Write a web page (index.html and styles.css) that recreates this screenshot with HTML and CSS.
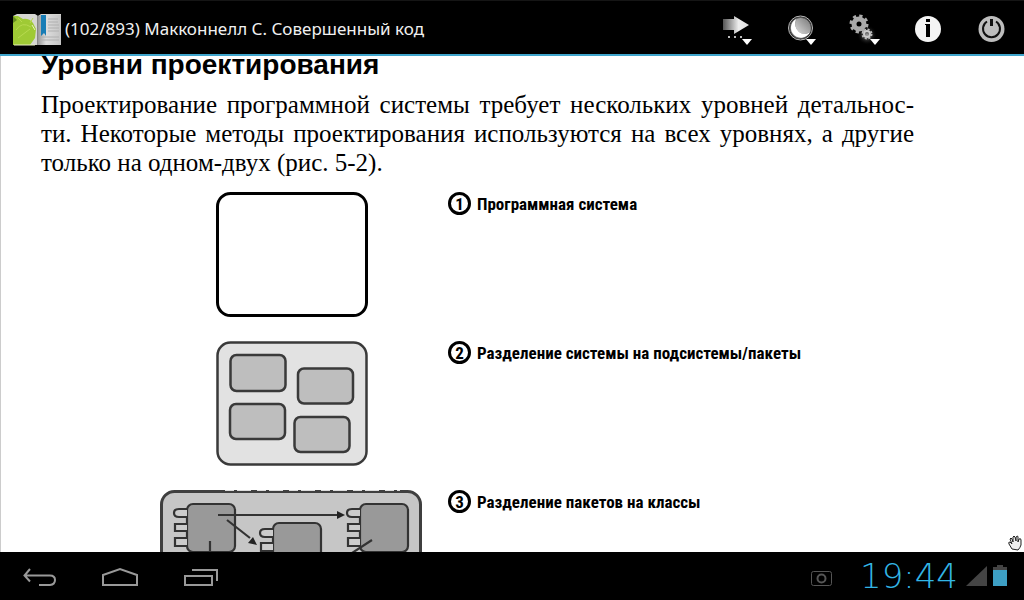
FILE: index.html
```html
<!DOCTYPE html>
<html lang="ru">
<head>
<meta charset="utf-8">
<meta name="viewport" content="width=device-width, initial-scale=1">
<title>Макконнелл С. Совершенный код</title>
<link rel="stylesheet" href="styles.css">
</head>
<body>
<header class="bar">
  <svg class="logo" width="48" height="32" viewBox="13 14 48 32" aria-hidden="true">
    <defs><linearGradient id="pg" x1="0" x2="1"><stop offset="0" stop-color="#999"/><stop offset=".35" stop-color="#ddd"/><stop offset="1" stop-color="#c4c4c4"/></linearGradient></defs>
    <path d="M13 16l4-2h18l3 2 3-2h20v31H13z" fill="#d6d6d2"/>
    <path d="M38 16l3-1h20v30H38z" fill="url(#pg)"/>
    <path d="M13 16h5l5 3q6-1 10 4l3 6-1 9-5 7H13z" fill="#9fca35"/>
    <path d="M18 18l4 4M33 18l-3 5M16 30q6-9 15-3M18 38l12-9" stroke="#b8da50" fill="none"/>
    <path d="M13 16l4 4-4 3z" fill="#668c20"/>
    <path d="M32 25l3 5M14 45h21" stroke="#e8f0c0"/>
    <path d="M37.500 16v29" stroke="#888"/>
    <path d="M48 19h10M48 22h10M48 25h11M48 28h11M48 31h11M41 37h18M41 40h18" stroke="#b0b0b0"/>
    <path d="M41 15h5v21l-2-3-3 3z" fill="#187db6"/>
  </svg>
  <h1 class="title">(102/893) Макконнелл С. Совершенный код</h1>
  <nav class="tools" aria-label="Инструменты">
    <button class="tool" type="button" aria-label="Перейти">
      <svg width="64" height="54" viewBox="704 0 64 54"><defs><linearGradient id="ar" x1="0" x2="1"><stop offset="0" stop-color="#555"/><stop offset=".6" stop-color="#eee"/><stop offset="1" stop-color="#ddd"/></linearGradient></defs><path d="M723 18h11v-3l15 9-15 9v-4h-11z" fill="url(#ar)"/><path d="M728 36h2m4 0h2m4 0h2" stroke="#bbb" stroke-width="2"/><path d="M742 38h10l-5 6z" fill="#fff"/></svg>
    </button>
    <button class="tool" type="button" aria-label="Ночной режим">
      <svg width="64" height="54" viewBox="768 0 64 54"><defs><linearGradient id="mo" x1="0" x2="1" y1="1" y2="0"><stop offset="0" stop-color="#ddd"/><stop offset="1" stop-color="#777"/></linearGradient></defs><circle cx="800.500" cy="27" r="12" fill="#222" stroke="#bbb"/><circle cx="800.500" cy="27" r="10.500" fill="#999" stroke="#555"/><path d="M796 18a10 10 0 1 0 14 13q-5 4-11 0-6-6-3-13z" fill="#fff"/><path d="M797 18q7-2 11 3 4 5 2 10-6 4-11 0-6-6-2-13z" fill="url(#mo)"/><path d="M806 38h10l-5 6z" fill="#fff"/></svg>
    </button>
    <button class="tool" type="button" aria-label="Настройки">
      <svg width="64" height="54" viewBox="832 0 64 54"><defs><radialGradient id="gl"><stop offset="0" stop-color="#aaa"/><stop offset="1" stop-color="#000" stop-opacity="0"/></radialGradient></defs><circle cx="867" cy="34" r="10" fill="url(#gl)"/><circle cx="859" cy="23" r="5" fill="none" stroke="#aaa" stroke-width="5"/><circle cx="859" cy="23" r="8" fill="none" stroke="#aaa" stroke-width="3" stroke-dasharray="3.200 3.080"/><circle cx="867" cy="33" r="3" fill="none" stroke="#ccc" stroke-width="2"/><circle cx="867" cy="33" r="4.500" fill="none" stroke="#bbb" stroke-width="2" stroke-dasharray="2 1.530"/><path d="M870 38h10l-5 6z" fill="#fff"/></svg>
    </button>
    <button class="tool" type="button" aria-label="Сведения">
      <svg width="64" height="54" viewBox="896 0 64 54"><circle cx="928" cy="28" r="13" fill="#f4f4f4"/><path d="M926 18h4v3h-4zM925 23h5v13h-4V24h-1z" fill="#000"/></svg>
    </button>
    <button class="tool" type="button" aria-label="Выход">
      <svg width="64" height="54" viewBox="960 0 64 54"><circle cx="991.500" cy="28" r="13" fill="#bdbdbd"/><path d="M987 20.500a8.500 8.500 0 1 0 9 0" fill="none" stroke="#111" stroke-width="2"/><path d="M989 16h5v10h-5z" fill="#bdbdbd"/><path d="M991.500 18v7" stroke="#111" stroke-width="3"/></svg>
    </button>
  </nav>
</header>

<main class="page">
  <article class="sheet">
    <h2 class="heading">Уровни проектирования</h2>
    <p class="text"><span class="line">Проектирование программной системы требует нескольких уровней детальнос-</span><span class="line">ти. Некоторые методы проектирования используются на всех уровнях, а другие</span>только на одном-двух (рис. 5-2).</p>
    <div class="levels">
      <figure class="level">
        <svg class="art" width="262" height="125" viewBox="160 193 262 125" aria-hidden="true"><rect x="217.500" y="194.500" width="149" height="122" rx="13" fill="#fff" stroke="#000" stroke-width="3"/></svg>
        <figcaption class="caption"><span class="num">1</span>Программная система</figcaption>
      </figure>
      <figure class="level">
        <svg class="art" width="262" height="125" viewBox="160 341 262 125" aria-hidden="true"><g stroke="#3a3a3a" stroke-width="2.500"><rect x="217.500" y="342.500" width="149" height="122" rx="13" fill="#e2e2e2"/><g fill="#bebebe"><rect x="230.500" y="355" width="55" height="36" rx="6"/><rect x="298" y="368.500" width="55" height="35" rx="6"/><rect x="230" y="404" width="55" height="35" rx="6"/><rect x="294.500" y="417" width="55" height="35" rx="6"/></g></g></svg>
        <figcaption class="caption"><span class="num">2</span>Разделение системы на подсистемы/пакеты</figcaption>
      </figure>
      <figure class="level">
        <svg class="art" width="262" height="125" viewBox="160 490 262 125" aria-hidden="true"><rect x="161.500" y="491.500" width="259" height="122" rx="13" fill="#c6c6c6" stroke="#3f3f3f" stroke-width="3"/><path d="M225 490.500h175" stroke="#ddd" stroke-dasharray="9 3 14 6"/><g stroke="#333" stroke-width="2.200"><g fill="#999"><rect x="187" y="504" width="48" height="48" rx="6"/><rect x="273" y="523" width="48" height="48" rx="6"/><rect x="360" y="504" width="48" height="48" rx="6"/></g><g fill="#ccc"><path d="M187 509h-8q-5 0-5 4 0 4 5 4h8M187 524h-12v7h12M187 538h-12v8h12M273 529h-8q-5 0-5 4 0 4 5 4h8M273 543h-12v8h12M360 509h-8q-5 0-5 4 0 4 5 4h8M360 524h-12v7h12M360 538h-12v8h12"/></g><path d="M218 515h121M227 520l23 18M210 552v-11M352 553l20-13" fill="none"/></g><path d="M345 515l-8-4v8zM257 545l-9-2 5-6z" fill="#222"/></svg>
        <figcaption class="caption"><span class="num">3</span>Разделение пакетов на классы</figcaption>
      </figure>
    </div>
  </article>
  <svg class="hand" width="16" height="17" viewBox="1008 535 16 17" aria-hidden="true"><path d="M1012 549l-3-5q-1-2 1-2l2 2-2-5q1-2 2 0l1 3v-5q1-2 2 0l1 4 0-4q2-2 2 0v5l1-3q2-1 2 1v5q-1 3-3 5z" fill="#eee" stroke="#222"/></svg>
</main>

<footer class="system">
  <button class="key" type="button" aria-label="Назад"><svg width="80" height="48" viewBox="0 552 80 48"><path d="M30 569l-5.500 6.500 5.500 6M25 575.500h25q5 0 5 4.500t-5 5H39" fill="none" stroke="#999" stroke-width="2"/></svg></button>
  <button class="key" type="button" aria-label="Домой"><svg width="80" height="48" viewBox="80 552 80 48"><path d="M103 585v-10l17-6 17 6v10z" fill="none" stroke="#999" stroke-width="2"/></svg></button>
  <button class="key" type="button" aria-label="Недавние"><svg width="80" height="48" viewBox="160 552 80 48"><path d="M185 576h27v9h-27zM192 570h25v11" fill="none" stroke="#999" stroke-width="2"/></svg></button>
  <div class="status">
    <svg class="camera" width="21" height="15" viewBox="810 571 21 15" aria-hidden="true"><rect x="810.500" y="571.500" width="20" height="14" rx="2" fill="none" stroke="#555"/><circle cx="820.500" cy="578.500" r="4" fill="none" stroke="#555" stroke-width="2"/></svg>
    <time class="clock">19:44</time>
    <svg class="signs" width="41" height="22" viewBox="966 565 41 22" aria-hidden="true"><path d="M966 586l21-20v20z" fill="#444"/><path d="M993 567h4v-2h6v2h4v4h-14z" fill="#444"/><path d="M993 570h14v16h-14z" fill="#3d9fc4"/></svg>
  </div>
</footer>
</body>
</html>
```
FILE: styles.css
```css
* { box-sizing: border-box; }

body {
  margin: 0;
  height: 100vh;
  display: flex;
  flex-direction: column;
  overflow: hidden;
  background: #000;
  font-family: "Noto Sans", Roboto, sans-serif;
}

svg { display: block; }

.bar {
  flex: none;
  display: flex;
  align-items: center;
  height: 56px;
  padding-left: 13px;
  border-top: 1px solid #151515;
  border-bottom: 2px solid #3fa5cc;
  color: #f0f0f0;
}

.logo { flex: none; margin-top: 4px; }

.title {
  flex: 1;
  margin: 2px 0 0 4px;
  font-size: 17px;
  line-height: 24px;
  font-weight: 400;
  white-space: nowrap;
  overflow: hidden;
  text-overflow: ellipsis;
}

.tools { display: flex; }

.tool,
.key {
  padding: 0;
  border: 0;
  background: none;
  cursor: pointer;
}

.page {
  position: relative;
  flex: 1;
  min-height: 0;
  overflow: hidden;
  background: #fff;
  color: #000;
  border-left: 1px solid #ccc;
}

.sheet {
  margin-top: -8px;
  padding: 0 110px 0 40px;
}

.heading {
  margin: 0;
  font: bold 28px/34px "Liberation Sans", Arial, sans-serif;
}

.text {
  margin: 8px 0 0;
  font: 25px/29px "Liberation Serif", "Times New Roman", serif;
}

.line {
  display: block;
  text-align-last: justify;
}

.levels {
  display: flex;
  flex-direction: column;
  gap: 24px;
  margin-top: 15px;
  padding-left: 119px;
}

.level {
  display: flex;
  align-items: flex-start;
  gap: 26px;
  margin: 0;
}

.art { flex: none; }

.caption {
  display: flex;
  align-items: center;
  gap: 6px;
  font: bold 17px/22px "Liberation Sans Narrow", "Roboto Condensed", "Liberation Sans", sans-serif;
  white-space: nowrap;
}

.num {
  display: flex;
  align-items: center;
  justify-content: center;
  width: 23px;
  height: 23px;
  border: 3px solid #000;
  border-radius: 50%;
}

.hand {
  position: absolute;
  right: 0;
  bottom: 0;
}

.system {
  flex: none;
  display: flex;
  height: 48px;
}

.status {
  display: flex;
  align-items: center;
  margin-left: auto;
  padding-right: 17px;
}

.camera { margin-top: 4px; }

.clock {
  margin: 0 8px 0 28px;
  font: 200 34px/48px "DejaVu Sans", "DejaVu Sans Light", sans-serif;
  color: #33b5e5;
}
```
